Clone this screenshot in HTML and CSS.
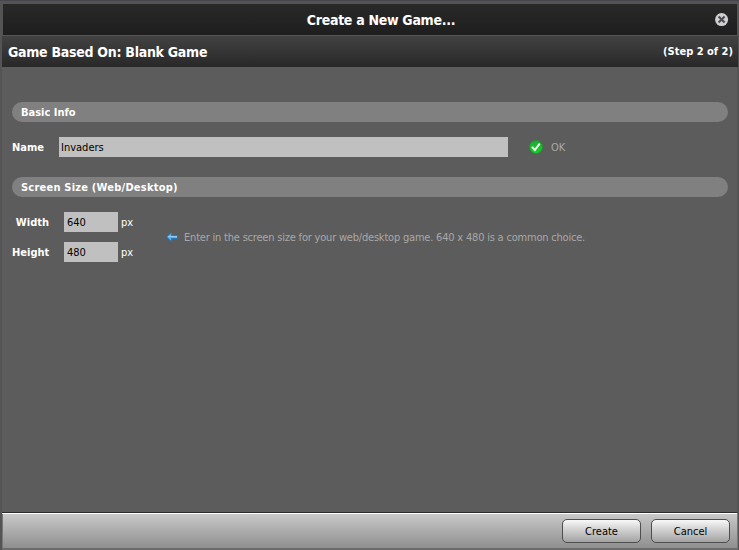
FILE: index.html
```
<!DOCTYPE html>
<html lang="en">
<head>
<meta charset="utf-8">
<title>Create a New Game...</title>
<link rel="stylesheet" href="styles.css">
</head>
<body>
<main class="dialog">
  <header class="titlebar">
    <h1><span class="t-title">Create a New Game...</span></h1>
    <button class="close" aria-label="Close"><svg width="14" height="14" viewBox="0 0 14 14"><circle cx="6.6" cy="6.6" r="6.5" fill="#cfcfd1"/><path d="M3.6 3.6l6 6M9.6 3.6l-6 6" stroke="#4c4b55" stroke-width="2.1"/></svg></button>
  </header>
  <div class="subheader"><h2 class="t-based">Game Based On: Blank Game</h2><span class="t-step">(Step 2 of 2)</span></div>
  <div class="content">
    <h3 class="section"><span class="t-basic">Basic Info</span></h3>
    <div class="name-row">
      <label class="t-name" for="name">Name</label>
      <input class="name-input" id="name" value="Invaders">
      <svg class="ok-icon" width="14" height="14" viewBox="0 0 14 14"><defs><linearGradient id="g" x2="0" y2="1"><stop stop-color="#22a838"/><stop offset="1" stop-color="#14d424"/></linearGradient></defs><circle cx="7" cy="7" r="6.5" fill="url(#g)" stroke="#1a9a2b" stroke-width=".8"/><path d="M3 6.8l2.9 3.2 4.8-6.3" fill="none" stroke="#f2fff2" stroke-width="1.9"/></svg>
      <span class="hint t-ok">OK</span>
    </div>
    <h3 class="section"><span class="t-screen">Screen Size (Web/Desktop)</span></h3>
    <div class="size-row">
      <div class="fields">
        <label class="t-width" for="w">Width</label><input id="w" value="640"><span class="t-px">px</span>
        <label class="t-height" for="h">Height</label><input id="h" value="480"><span class="t-px">px</span>
      </div>
      <svg class="arrow" width="12" height="10" viewBox="0 0 12 10"><path d="M.6 5L5.5.4V3.5H11.5V6.5H5.5V9.6z" fill="#50b2f5" stroke="#2274b8" stroke-width=".8"/><path d="M2 4.6h9" stroke="#8fd2ff" stroke-width="1"/></svg>
      <span class="hint t-hint">Enter in the screen size for your web/desktop game. 640 x 480 is a common choice.</span>
    </div>
  </div>
  <footer><button class="btn"><span class="t-create">Create</span></button><button class="btn"><span class="t-cancel">Cancel</span></button></footer>
</main>
</body>
</html>
```
FILE: styles.css
```
* { box-sizing: border-box; }
body { margin: 0; background: #545454; }
body, input, button { font-family: "DejaVu Sans Condensed", "DejaVu Sans", sans-serif; font-stretch: condensed; font-size: 11px; }
h1, h2, h3 { margin: 0; font-weight: bold; }
span, label, h2 { white-space: nowrap; }
button, input { border: 0; padding: 0; }
.dialog { width: 739px; height: 550px; display: flex; flex-direction: column; border-top: 1px solid #47464f; padding: 3px 1px 0 2px; color: #fff; overflow: hidden; }
.titlebar { height: 31px; flex: none; margin: 0 1px; padding: 0 8px 0 44px; display: flex; align-items: center; background: linear-gradient(#292929, #1e1e1e); }
h1 { flex: 1; text-align: center; font-size: 14px; line-height: 32px; letter-spacing: -0.3px; }
.close { width: 14px; height: 14px; background: none; }
.close svg { display: block; }
.subheader { height: 32px; flex: none; border-top: 1px solid #555; padding: 0 5px 0 6px; display: flex; justify-content: space-between; background: linear-gradient(#424242, #282828); }
h2 { font-size: 14px; line-height: 32px; letter-spacing: -0.28px; }
.t-step { font-weight: bold; line-height: 31px; }
.content { flex: 1; background: #5c5c5c; border-right: 1px solid #555; padding: 35px 9px 0 10px; }
.section { height: 20px; line-height: 21px; padding-left: 9px; border-radius: 10px; background: #808080; font-size: 11px; }
.t-screen { letter-spacing: 0.22px; }
.name-row { height: 20px; margin: 15px 0 20px; display: flex; align-items: center; }
label { font-weight: bold; }
.name-row label { width: 47px; }
input { height: 20px; background: #c0c0c0; color: #000; padding-left: 3px; border-radius: 0; }
.name-input { width: 449px; padding-left: 2px; }
.ok-icon { margin: 0 8px 0 21px; }
.hint { color: #a8a8a8; }
.t-hint { letter-spacing: -0.2px; }
.size-row { margin-top: 15px; display: flex; align-items: center; }
.fields { display: grid; grid-template-columns: 52px 54px 16px; row-gap: 10px; align-items: center; }
.fields label { width: 37px; text-align: right; }
.t-px { padding-left: 3px; }
.arrow { margin: 0 6px 0 32px; }
footer { height: 38px; flex: none; display: flex; justify-content: flex-end; align-items: flex-start; gap: 10px; padding: 6px 7px 0 0; border-top: 1px solid #2b2b2b; border-right: 1px solid #777; border-bottom: 2px solid #6b6b6b; box-shadow: inset 0 1px #fff, inset 1px 0 #777; background: linear-gradient(#cacaca, #8f8f8f); }
.btn { width: 79px; height: 24px; border: 1px solid #4d4d4d; border-radius: 5px; background: linear-gradient(#f8f8f8, #d0d0d0 45%, #a3a3a3); color: #000; padding-top: 1px; line-height: 21px; }
```
